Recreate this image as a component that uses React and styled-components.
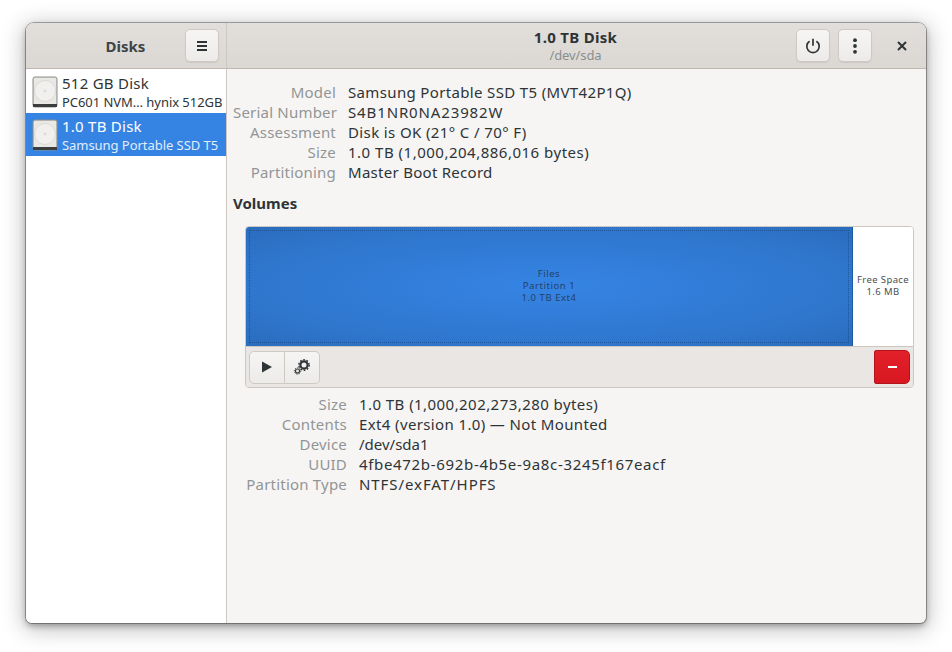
import styled, { createGlobalStyle } from "styled-components";

const GlobalStyle = createGlobalStyle`
    html, body { margin: 0; padding: 0; background: #ffffff; }
    body { font-family: "Noto Sans", sans-serif; }
`;
const Page = styled.div`
    width: 952px;
    height: 652px;
    box-sizing: border-box;
    padding: 23px 26px 29px;
    overflow: hidden;
`;
const Window = styled.div`
    width: 900px;
    height: 600px;
    display: grid;
    grid-template-columns: 201px 1fr;
    grid-template-rows: 46px 1fr;
    border-radius: 8px 8px 6px 6px;
    overflow: hidden;
    background: #f6f5f4;
    box-shadow: 0 0 0 1px rgba(0,0,0,.3), 0 3px 6px rgba(0,0,0,.3), 0 4px 22px 3px rgba(0,0,0,.24);
`;
const Bar = styled.div`
    display: flex;
    align-items: center;
    background: linear-gradient(#e1dedb, #dbd8d4);
    border-bottom: 1px solid #bfb8b1;
    box-sizing: border-box;
    ${p => p.$side && "border-right: 1px solid #cdc7c2; padding: 0 7px 0 40px;"}
`;
const SideTitle = styled.div`
    flex: 1;
    text-align: center;
    font-size: 15px;
    font-weight: 700;
    color: #3d4447;
`;
const IconButton = styled.button`
    width: 34px;
    height: 33px;
    padding: 0;
    display: flex;
    align-items: center;
    justify-content: center;
    border: 1px solid #cfc9c4;
    border-radius: 5px;
    background: linear-gradient(#f6f5f4, #edebe9);
    box-shadow: 0 1px 1px rgba(0,0,0,.08);
    color: #2e3436;
    margin-right: ${p => p.$gap || 0}px;
`;
const TitleBlock = styled.div`
    flex: 1;
    text-align: center;
    padding-left: 128px;
`;
const Title = styled.div`
    font-size: 15px;
    font-weight: 700;
    line-height: 18px;
    color: #2e3436;
    letter-spacing: 0.3px;
`;
const SubTitle = styled.div`
    font-size: 13px;
    line-height: 18px;
    color: #8b8e8f;
    letter-spacing: -0.1px;
`;
const CloseButton = styled.div`
    width: 54px;
    height: 33px;
    box-sizing: border-box;
    padding-left: 6px;
    display: flex;
    align-items: center;
    justify-content: center;
    color: #2e3436;
`;
const Sidebar = styled.div`
    background: #ffffff;
    border-right: 1px solid #cdc7c2;
    box-sizing: border-box;
    padding-top: 1px;
`;
const DiskRow = styled.div`
    height: 43px;
    display: flex;
    align-items: center;
    gap: 4px;
    padding-left: 6px;
    background: ${p => (p.$active ? "#3584e4" : "transparent")};
    color: ${p => (p.$active ? "#ffffff" : "#2e3436")};
`;
const DiskText = styled.div`
    min-width: 0;
    white-space: nowrap;
`;
const DiskName = styled.div`
    font-size: 15px;
    line-height: 20px;
    letter-spacing: 0.25px;
`;
const DiskModel = styled.div`
    font-size: 13px;
    line-height: 18px;
    letter-spacing: -0.05px;
    opacity: ${p => (p.$active ? 0.85 : 1)};
`;
const Main = styled.div`
    padding: 13px 12px 0 6px;
`;
const Info = styled.div`
    display: grid;
    grid-template-columns: ${p => p.$label}px 1fr;
    column-gap: 12px;
    grid-auto-rows: 20px;
    font-size: 15px;
    line-height: 20px;
    white-space: nowrap;
    margin-left: ${p => p.$indent || 0}px;
`;
const Label = styled.div`
    text-align: right;
    color: #929595;
    letter-spacing: 0.2px;
`;
const Value = styled.div`
    color: #2e3436;
    letter-spacing: ${p => p.$track}px;
`;
const Heading = styled.div`
    font-size: 15px;
    font-weight: 700;
    line-height: 20px;
    color: #2e3436;
    margin: 11px 0 13px;
`;
const VolumePanel = styled.div`
    margin-left: 12px;
    border: 1px solid #cdc7c2;
    border-radius: 4px;
    overflow: hidden;
    margin-bottom: 6px;
`;
const VolumeMap = styled.div`
    display: flex;
    height: 119px;
    background: #ffffff;
    border-bottom: 1px solid #cdc7c2;
`;
const Partition = styled.div`
    flex: 1;
    position: relative;
    display: flex;
    align-items: center;
    justify-content: center;
    text-align: center;
    box-sizing: border-box;
    padding-bottom: 2px;
    font-size: 9.5px;
    line-height: 12px;
    letter-spacing: 0.55px;
    color: #24426a;
    background: radial-gradient(ellipse at center, #3584e4 0%, #2f76cd 70%, #2a6cbd 100%);
    border-right: 1px solid #1c5aa3;
    &::after {
        content: "";
        position: absolute;
        inset: 3px;
        border: 1px dotted rgba(20, 60, 110, .55);
    }
`;
const FreeSpace = styled.div`
    width: 60px;
    display: flex;
    align-items: center;
    justify-content: center;
    text-align: center;
    box-sizing: border-box;
    padding-bottom: 2px;
    font-size: 9.5px;
    line-height: 12px;
    letter-spacing: 0.4px;
    color: #4a4f50;
`;
const VolumeTools = styled.div`
    height: 40px;
    display: flex;
    align-items: center;
    justify-content: space-between;
    padding: 0 3px 0 3px;
    background: #e9e6e3;
`;
const ToolGroup = styled.div`
    display: flex;
`;
const ToolButton = styled.button`
    width: ${p => (p.$first ? 36 : 35)}px;
    height: 33px;
    padding: 0;
    display: flex;
    align-items: center;
    justify-content: center;
    border: 1px solid #cfc9c4;
    background: linear-gradient(#f6f5f4, #edebe9);
    color: #2e3436;
    border-radius: ${p => (p.$first ? "5px 0 0 5px" : "0 5px 5px 0")};
    ${p => !p.$first && "border-left: none;"}
`;
const DangerButton = styled.button`
    width: 36px;
    height: 34px;
    padding: 0;
    display: flex;
    align-items: center;
    justify-content: center;
    border: 1px solid #b2161d;
    border-radius: 2px 5px 5px 2px;
    background: linear-gradient(#e2202a, #d81820);
`;
const Minus = styled.span`
    width: 9px;
    height: 2px;
    background: #ffffff;
`;

function DiskIcon() {
    return (
        <svg width="26" height="32" viewBox="0 0 26 32">
            <rect x="1" y="1" width="24" height="30" rx="2" fill="#d8d7d3" stroke="#8f8f8c" strokeWidth="1" />
            <rect x="1" y="28" width="24" height="3" fill="#3b3d3f" />
            <rect x="2" y="2" width="22" height="26" fill="#e9e8e5" />
            <circle cx="13" cy="15" r="10.5" fill="#f1f0ee" stroke="#dcdbd8" />
            <circle cx="13" cy="15" r="1.5" fill="#dcdbd8" />
        </svg>
    );
}

function Disk({ name, model, active }) {
    return (
        <DiskRow $active={active}>
            <DiskIcon />
            <DiskText>
                <DiskName>{name}</DiskName>
                <DiskModel $active={active}>{model}</DiskModel>
            </DiskText>
        </DiskRow>
    );
}

function Gears() {
    return (
        <svg width="18" height="18" viewBox="0 0 18 18" fill="none" stroke="#2e3436">
            <circle cx="11" cy="7" r="3.6" strokeWidth="2.2" />
            <circle cx="11" cy="7" r="5.2" strokeWidth="1.4" strokeDasharray="1.7 1.6" />
            <circle cx="4.5" cy="13" r="2" strokeWidth="1.1" />
            <circle cx="4.5" cy="13" r="3.2" strokeWidth="1" strokeDasharray="1.2 1.2" />
        </svg>
    );
}

// third item is the letter spacing that gets each value to its width in the reference
const diskInfo = [
    ["Model", "Samsung Portable SSD T5 (MVT42P1Q)", 0.35],
    ["Serial Number", "S4B1NR0NA23982W", 0.87],
    ["Assessment", "Disk is OK (21° C / 70° F)", 0.38],
    ["Size", "1.0 TB (1,000,204,886,016 bytes)", 0.5],
    ["Partitioning", "Master Boot Record", 0.28],
];
const partInfo = [
    ["Size", "1.0 TB (1,000,202,273,280 bytes)", 0.44],
    ["Contents", "Ext4 (version 1.0) — Not Mounted", 0.37],
    ["Device", "/dev/sda1", 0],
    ["UUID", "4fbe472b-692b-4b5e-9a8c-3245f167eacf", 0.67],
    ["Partition Type", "NTFS/exFAT/HPFS", 0.93],
];

function InfoRows({ rows }) {
    return rows.map(([k, v, track]) => [
        <Label key={k}>{k}</Label>,
        <Value key={k + "v"} $track={track}>{v}</Value>,
    ]);
}

export default function App() {
    return (
        <Page>
            <GlobalStyle />
            <Window>
                <Bar $side>
                    <SideTitle>Disks</SideTitle>
                    <IconButton>
                        <svg width="16" height="16" viewBox="0 0 16 16" fill="#2e3436">
                            <rect x="3" y="3" width="10" height="2" />
                            <rect x="3" y="7" width="10" height="2" />
                            <rect x="3" y="11" width="10" height="2" />
                        </svg>
                    </IconButton>
                </Bar>
                <Bar>
                    <TitleBlock>
                        <Title>1.0 TB Disk</Title>
                        <SubTitle>/dev/sda</SubTitle>
                    </TitleBlock>
                    <IconButton $gap={8}>
                        <svg width="16" height="16" viewBox="0 0 16 16" fill="none" stroke="#2e3436" strokeWidth="1.7">
                            <path d="M4.6 3.2a6.2 6.2 0 1 0 6.8 0" />
                            <path d="M8 0.8v7" />
                        </svg>
                    </IconButton>
                    <IconButton>
                        <svg width="16" height="16" viewBox="0 0 16 16" fill="#2e3436">
                            <circle cx="8" cy="2.2" r="1.9" />
                            <circle cx="8" cy="8" r="1.9" />
                            <circle cx="8" cy="13.8" r="1.9" />
                        </svg>
                    </IconButton>
                    <CloseButton>
                        <svg width="10" height="10" viewBox="0 0 10 10" stroke="#2e3436" strokeWidth="2">
                            <path d="M1 1l8 8M9 1l-8 8" />
                        </svg>
                    </CloseButton>
                </Bar>
                <Sidebar>
                    <Disk name="512 GB Disk" model="PC601 NVM… hynix 512GB" />
                    <Disk name="1.0 TB Disk" model="Samsung Portable SSD T5" active />
                </Sidebar>
                <Main>
                    <Info $label={103}>
                        <InfoRows rows={diskInfo} />
                    </Info>
                    <Heading>Volumes</Heading>
                    <VolumePanel>
                        <VolumeMap>
                            <Partition>
                                <div>Files<br />Partition 1<br />1.0 TB Ext4</div>
                            </Partition>
                            <FreeSpace>
                                <div>Free Space<br />1.6 MB</div>
                            </FreeSpace>
                        </VolumeMap>
                        <VolumeTools>
                            <ToolGroup>
                                <ToolButton $first>
                                    <svg width="12" height="12" viewBox="0 0 12 12" fill="#2e3436"><path d="M1 0.5l10 5.5-10 5.5z" /></svg>
                                </ToolButton>
                                <ToolButton><Gears /></ToolButton>
                            </ToolGroup>
                            <DangerButton><Minus /></DangerButton>
                        </VolumeTools>
                    </VolumePanel>
                    <Info $label={102} $indent={12}>
                        <InfoRows rows={partInfo} />
                    </Info>
                </Main>
            </Window>
        </Page>
    );
}
